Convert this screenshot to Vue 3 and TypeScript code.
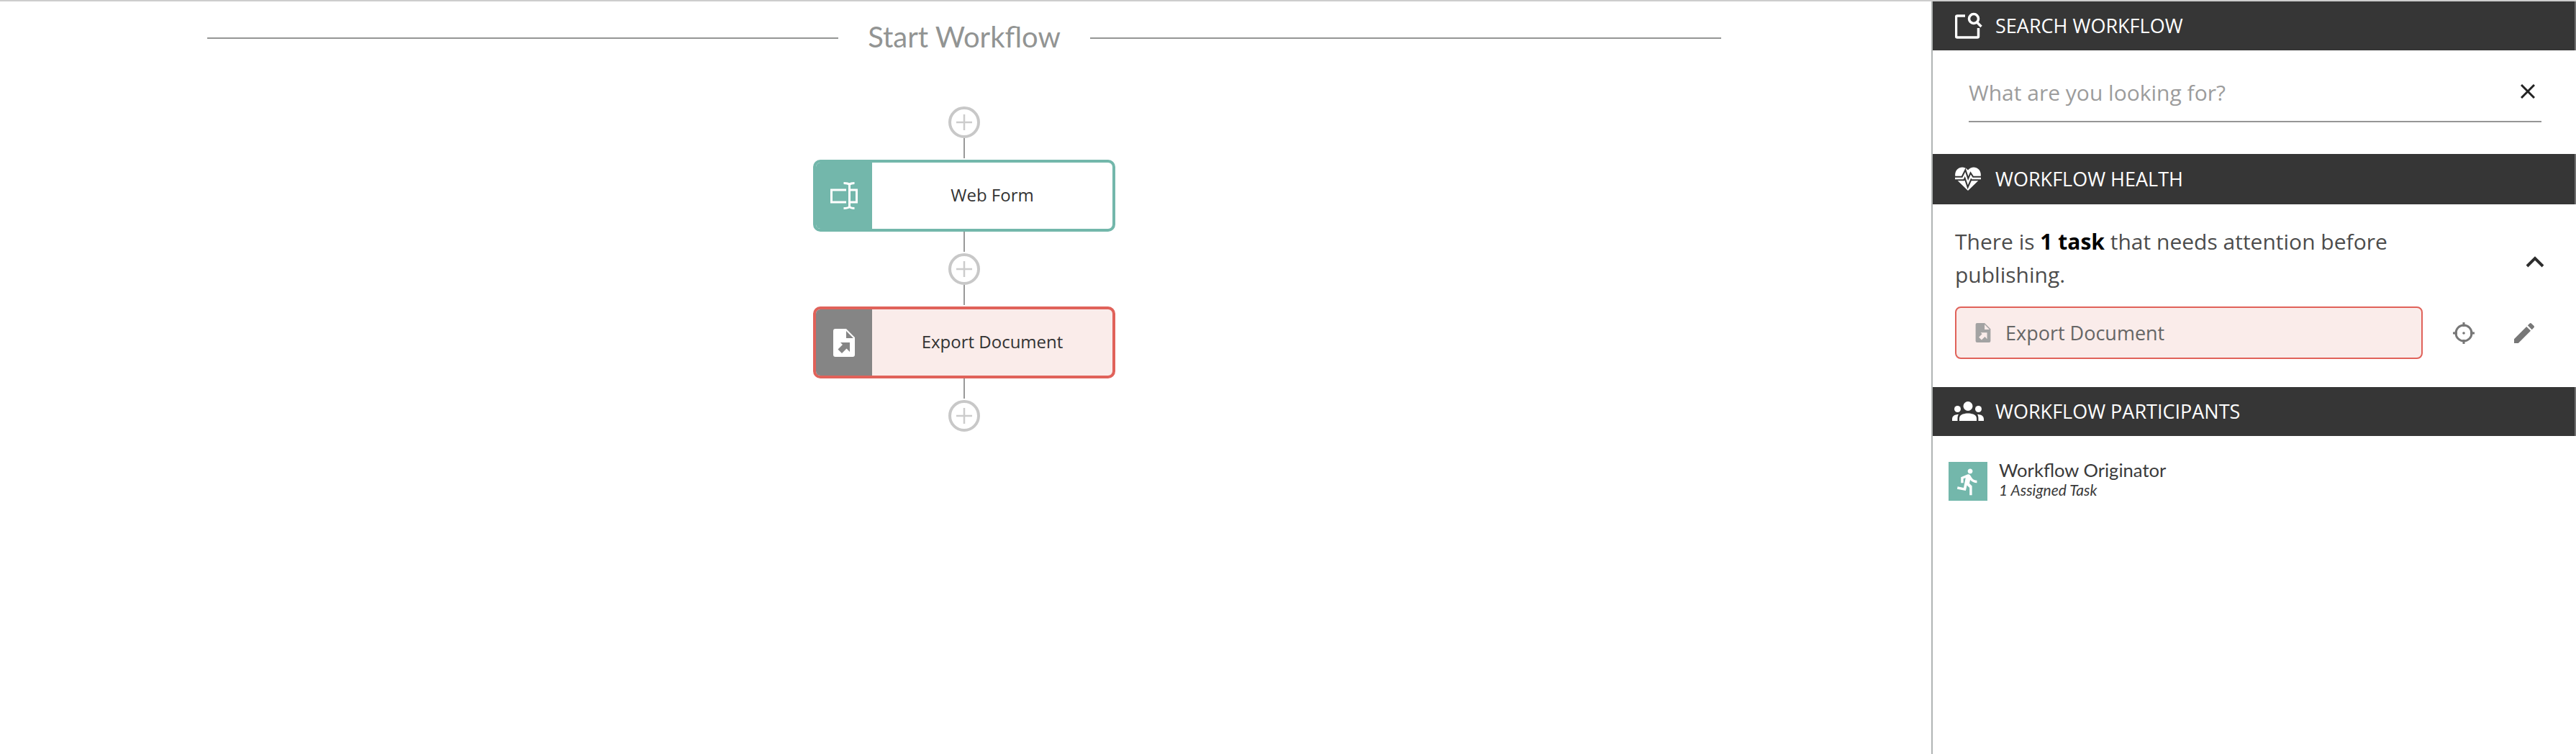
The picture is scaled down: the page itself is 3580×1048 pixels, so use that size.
<script setup lang="ts">
const docPath =
  'M3 0H18L30 12V36A3 3 0 0 1 27 39H3A3 3 0 0 1 0 36V3A3 3 0 0 1 3 0ZM18 3V13H28ZM10 19H23V32L18.5 27.5L12 34L6.5 28.5L13 22Z'
</script>

<template>
  <div class="page">
    <main class="canvas">
      <div class="title-row">
        <span class="rule"></span>
        <h1 class="title">Start Workflow</h1>
        <span class="rule"></span>
      </div>
      <div class="flow">
        <span class="add"><svg viewBox="0 0 24 24" class="plus"><path d="M12 1v22M1 12h22" /></svg></span>
        <span class="wire"></span>
        <div class="node node-form">
          <div class="node-icon">
            <svg viewBox="0 0 38 38" width="38" height="38" class="form-icon">
              <path d="M22 11H1.5V28H22M27 11H36.5V28H27M18.5 1.5C22 1.5 24.5 1.5 26.5 3.5C28.5 1.5 31 1.5 33.5 1.5M26.5 3.5V35M18.5 36.5C22 36.5 24.5 36.5 26.5 34.5C28.5 36.5 31 36.5 33.5 36.5" />
            </svg>
          </div>
          <div class="node-label">Web Form</div>
        </div>
        <span class="wire"></span>
        <span class="add"><svg viewBox="0 0 24 24" class="plus"><path d="M12 1v22M1 12h22" /></svg></span>
        <span class="wire"></span>
        <div class="node node-error">
          <div class="node-icon">
            <svg viewBox="0 0 30 39" width="30" height="39"><path :d="docPath" fill="#fff" fill-rule="evenodd" /></svg>
          </div>
          <div class="node-label">Export Document</div>
        </div>
        <span class="wire"></span>
        <span class="add"><svg viewBox="0 0 24 24" class="plus"><path d="M12 1v22M1 12h22" /></svg></span>
      </div>
    </main>

    <aside class="panel">
      <header class="bar">
        <svg viewBox="0 0 38 37" width="38" height="37" class="bar-icon">
          <path d="M14 5H3A1.5 1.5 0 0 0 1.5 6.500V33.500A1.500 1.500 0 0 0 3 35H31A1.500 1.500 0 0 0 32.500 33.500V22" fill="none" stroke="#fff" stroke-width="3.500" />
          <circle cx="26" cy="9" r="6.500" fill="none" stroke="#fff" stroke-width="3.500" />
          <path d="M30.500 14L36.500 20" fill="none" stroke="#fff" stroke-width="3.500" />
        </svg>
        <span>SEARCH WORKFLOW</span>
      </header>
      <div class="search">
        <input class="search-input" type="text" placeholder="What are you looking for?" />
        <svg viewBox="0 0 20 20" width="20" height="20" class="close"><path d="M1 1L19 19M19 1L1 19" /></svg>
      </div>

      <header class="bar bar-tall">
        <svg viewBox="0 0 36 33" width="36" height="33" class="bar-icon heart">
          <path d="M18 33L2.500 18C-1 14-.5 7 3 3.500C7-.5 14-.5 18 4.500C22-.5 29-.5 33 3.500C36.500 7 37 14 33.500 18Z" fill="#fff" />
          <path d="M0 16H11L14 10L18 22L22 13L24 16H36" stroke="#363636" stroke-width="6.500" fill="none" />
          <path d="M0 16H11L14 10L18 22L22 13L24 16H36" stroke="#fff" stroke-width="2.300" fill="none" />
        </svg>
        <span>WORKFLOW HEALTH</span>
      </header>
      <div class="health">
        <div class="health-head">
          <p class="health-text">There is <b>1 task</b> that needs attention before publishing.</p>
          <svg viewBox="0 0 26 16" width="26" height="16" class="chevron"><path d="M2 14L13 3L24 14" /></svg>
        </div>
        <div class="issue-row">
          <div class="issue">
            <svg viewBox="0 0 30 39" width="22" height="27"><path :d="docPath" fill="#a3a3a3" fill-rule="evenodd" /></svg>
            <span>Export Document</span>
          </div>
          <svg viewBox="0 0 30 30" width="30" height="30" class="target">
            <circle cx="15" cy="15" r="11" fill="none" stroke="#777" stroke-width="3" />
            <circle cx="15" cy="15" r="1.800" fill="#777" />
            <path d="M15 0V6M15 24V30M0 15H6M24 15H30" stroke="#777" stroke-width="3" fill="none" />
          </svg>
          <svg viewBox="3 3 18 18" width="28" height="28" class="pencil">
            <path d="M3 17.250V21h3.750L17.810 9.940l-3.750-3.750L3 17.250zM20.710 7.040c.39-.39.39-1.020 0-1.410l-2.340-2.340c-.39-.39-1.020-.39-1.410 0l-1.830 1.830 3.750 3.750 1.830-1.830z" fill="#777" />
          </svg>
        </div>
      </div>

      <header class="bar">
        <svg viewBox="0 0 44 27" width="44" height="27" class="bar-icon people">
          <circle cx="22" cy="6.500" r="6.500" fill="#fff" />
          <circle cx="7.500" cy="10.500" r="4.500" fill="#fff" />
          <circle cx="36.500" cy="10.500" r="4.500" fill="#fff" />
          <path d="M10 27V23.500C10 20.500 12 18.500 15 17.500C19 16 25 16 29 17.500C32 18.500 34 20.500 34 23.500V27Z" fill="#fff" />
          <path d="M0 27V24.500C0 20 4 18 9 18C7.500 20 7.500 22 7.500 27Z" fill="#fff" />
          <path d="M44 27V24.500C44 20 40 18 35 18C36.500 20 36.500 22 36.500 27Z" fill="#fff" />
        </svg>
        <span>WORKFLOW PARTICIPANTS</span>
      </header>
      <div class="participant">
        <div class="avatar">
          <svg viewBox="0 0 24 24" width="41" height="41">
            <path d="M13.490 5.480c1.100 0 2-.9 2-2s-.9-2-2-2-2 .9-2 2 .9 2 2 2zm-3.600 13.900l1-4.400 2.100 2v6h2v-7.500l-2.100-2 .6-3c1.300 1.500 3.300 2.500 5.500 2.500v-2c-1.900 0-3.500-1-4.300-2.400l-1-1.600c-.4-.6-1-1-1.700-1-.3 0-.5.1-.8.1l-5.200 2.200v4.700h2v-3.400l1.800-.7-1.600 8.100-4.900-1-.4 2 7 1.400z" fill="#fff" />
          </svg>
        </div>
        <div class="who">
          <div class="who-name">Workflow Originator</div>
          <div class="who-sub">1 Assigned Task</div>
        </div>
      </div>
    </aside>
  </div>
</template>

<style>
html,
body {
  margin: 0;
  background: #fff;
}
</style>

<style scoped>
.page {
  display: flex;
  box-sizing: border-box;
  height: 1048px;
  border-top: 2px solid #cdcdcd;
  font-family: "Open Sans", sans-serif;
  overflow: hidden;
}
.canvas {
  flex: 1;
  min-width: 0;
  box-sizing: border-box;
  padding: 0 292px 0 288px;
}
.title-row {
  display: flex;
  align-items: center;
  gap: 41px;
  height: 102px;
  margin-bottom: 44px;
}
.rule {
  flex: 1;
  height: 2px;
  background: #949695;
}
.title {
  margin: 0;
  padding-bottom: 4px;
  font: 400 40px "Lato", sans-serif;
  color: #929493;
}
.flow {
  display: flex;
  flex-direction: column;
  align-items: center;
}
.add {
  box-sizing: border-box;
  display: flex;
  align-items: center;
  justify-content: center;
  width: 44px;
  height: 44px;
  border: 4px solid #c8c8c8;
  border-radius: 50%;
}
.plus {
  width: 24px;
  height: 24px;
  fill: none;
  stroke: #cccccc;
  stroke-width: 2.500;
}
.wire {
  width: 2px;
  height: 28px;
  margin-bottom: 2px;
  background: #999;
}
.node {
  box-sizing: border-box;
  display: flex;
  width: 420px;
  height: 100px;
  border: 4px solid;
  border-radius: 10px;
  overflow: hidden;
}
.node-form {
  border-color: #73b7ab;
  background: #fff;
}
.node-error {
  border-color: #e0625a;
  background: #faecea;
}
.node-icon {
  flex: none;
  display: flex;
  align-items: center;
  justify-content: center;
  width: 78px;
}
.node-form .node-icon {
  background: #73b7ab;
}
.node-error .node-icon {
  background: #858585;
}
.form-icon {
  fill: none;
  stroke: #fff;
  stroke-width: 3;
}
.node-label {
  flex: 1;
  display: flex;
  align-items: center;
  justify-content: center;
  padding-bottom: 4px;
  font-size: 24px;
  color: #333;
}
.panel {
  flex: none;
  box-sizing: border-box;
  width: 896px;
  border-left: 2px solid #b1b5b4;
}
.bar {
  box-sizing: border-box;
  display: flex;
  align-items: center;
  height: 68px;
  padding: 0 0 2px 31px;
  background: #363636;
  border-right: 2px solid #6e6e6e;
  color: #fff;
  font-size: 27px;
}
.bar-tall {
  height: 70px;
}
.bar-icon {
  flex: none;
  margin-right: 18px;
}
.heart {
  margin-right: 20px;
}
.people {
  margin-left: -4px;
  margin-right: 16px;
}
.search {
  position: relative;
  height: 144px;
  padding: 24px 48px 0 50px;
  box-sizing: border-box;
}
.search-input {
  display: block;
  box-sizing: border-box;
  width: 100%;
  height: 76px;
  padding: 0 0 6px;
  border: 0;
  border-bottom: 2px solid #969696;
  outline: none;
  background: transparent;
  font: 400 30px "Open Sans", sans-serif;
  color: #333;
}
.search-input::placeholder {
  color: #9c9c9c;
  opacity: 1;
}
.close {
  position: absolute;
  top: 47px;
  right: 57px;
  fill: none;
  stroke: #222;
  stroke-width: 3;
}
.health {
  box-sizing: border-box;
  height: 254px;
  padding: 29px 0 0 31px;
}
.health-head {
  display: flex;
  align-items: center;
}
.health-text {
  width: 640px;
  margin: 0;
  font-size: 30px;
  line-height: 46px;
  color: #4c4c4c;
}
.health-text b {
  color: #000;
}
.chevron {
  margin-left: 153px;
  margin-top: 10px;
  fill: none;
  stroke: #2d2d2d;
  stroke-width: 4;
}
.issue-row {
  display: flex;
  align-items: center;
  margin-top: 21px;
}
.issue {
  box-sizing: border-box;
  display: flex;
  align-items: center;
  gap: 20px;
  width: 650px;
  height: 73px;
  padding-left: 26px;
  border: 2px solid #e0625a;
  border-radius: 8px;
  background: #faecea;
  font-size: 27px;
  color: #666;
}
.target {
  margin-left: 42px;
}
.pencil {
  margin-left: 55px;
}
.participant {
  display: flex;
  align-items: flex-start;
  gap: 16px;
  padding: 36px 0 0 22px;
}
.avatar {
  flex: none;
  display: flex;
  align-items: center;
  justify-content: center;
  width: 54px;
  height: 54px;
  background: #73b7ab;
}
.who {
  font-family: "Lato", sans-serif;
  color: #3a3a3a;
}
.who-name {
  font-size: 25.600px;
  line-height: 32px;
  margin-top: -5px;
}
.who-sub {
  font-size: 21px;
  line-height: 24px;
  font-style: italic;
}
</style>
